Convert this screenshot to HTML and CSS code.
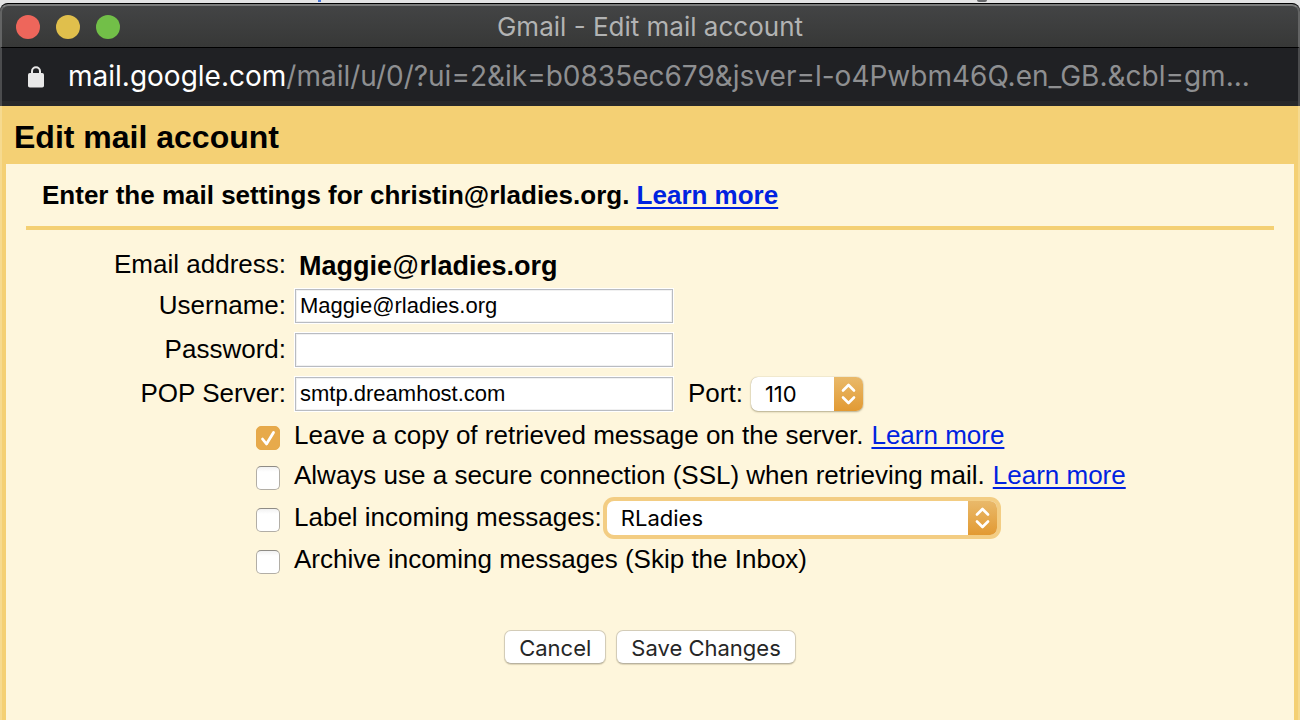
FILE: index.html
```html
<!DOCTYPE html>
<html lang="en">
<head>
<meta charset="utf-8">
<title>Gmail - Edit mail account</title>
<link rel="stylesheet" href="styles.css">
</head>
<body>
<div class="desktop">
  <span class="speck speck-blue"></span>
  <span class="speck speck-grey"></span>
</div>
<div class="window">
  <header class="titlebar">
    <div class="lights">
      <button class="light red" type="button" aria-label="Close"></button>
      <button class="light yellow" type="button" aria-label="Minimise"></button>
      <button class="light green" type="button" aria-label="Zoom"></button>
    </div>
    <div class="title">Gmail - Edit mail account</div>
  </header>
  <div class="urlbar">
    <svg class="lock" viewBox="0 0 16 22" aria-hidden="true">
      <path d="M4 8V5.200a4 4 0 0 1 8 0V8" fill="none" stroke="#e8e8e8" stroke-width="2"/>
      <rect x="0" y="7" width="16" height="14.5" rx="1.8" fill="#e8e8e8"/>
    </svg>
    <div class="url"><span class="host">mail.google.com</span>/mail/u/0/?ui=2&amp;ik=b0835ec679&amp;jsver=l-o4Pwbm46Q.en_GB.&amp;cbl=gm...</div>
  </div>
  <main class="page">
    <h1 class="heading">Edit mail account</h1>
    <form class="panel">
      <h2 class="intro">Enter the mail settings for christin@rladies.org. <a href="#">Learn more</a></h2>
      <div class="fields">
        <span class="label">Email address:</span>
        <div class="field email-row"><strong class="email">Maggie<span class="at">@</span>rladies.org</strong></div>
        <label class="label" for="username">Username:</label>
        <div class="field"><input class="text" id="username" type="text" value="Maggie@rladies.org"></div>
        <label class="label" for="password">Password:</label>
        <div class="field"><input class="text" id="password" type="password"></div>
        <label class="label" for="server">POP Server:</label>
        <div class="field">
          <input class="text" id="server" type="text" value="smtp.dreamhost.com">
          <label class="port-label" for="port">Port:</label>
          <div class="picker port">
            <select id="port"><option>110</option></select>
            <span class="arrows"><svg viewBox="0 0 29 34"><path d="M9 13.500l5.500-5.500L20 13.500M9 20.500l5.500 5.500 5.500-5.500"/></svg></span>
          </div>
        </div>
      </div>
      <div class="options">
        <div class="option">
          <input class="check" id="leave" type="checkbox" checked>
          <label for="leave">Leave a copy of retrieved message on the server.</label>
          <a href="#">Learn more</a>
        </div>
        <div class="option">
          <input class="check" id="ssl" type="checkbox">
          <label for="ssl">Always use a secure connection (SSL) when retrieving mail.</label>
          <a href="#">Learn more</a>
        </div>
        <div class="option tall">
          <input class="check" id="label" type="checkbox">
          <label for="label">Label incoming messages:</label>
          <div class="picker tag focused">
            <select aria-label="Label"><option>RLadies</option></select>
            <span class="arrows"><svg viewBox="0 0 29 34"><path d="M9 13.500l5.500-5.500L20 13.500M9 20.500l5.500 5.500 5.500-5.500"/></svg></span>
          </div>
        </div>
        <div class="option">
          <input class="check" id="archive" type="checkbox">
          <label for="archive">Archive incoming messages (Skip the Inbox)</label>
        </div>
      </div>
      <div class="actions">
        <button class="btn" type="button">Cancel</button>
        <button class="btn" type="button">Save Changes</button>
      </div>
    </form>
  </main>
</div>
</body>
</html>
```
FILE: styles.css
```css
* { box-sizing: border-box; }

body {
  margin: 0;
  min-height: 100vh;
  display: flex;
  flex-direction: column;
  background: #e3e3e4;
  color: #000;
  font-family: "Liberation Sans", Arial, sans-serif;
  font-size: 26px;
  line-height: 30px;
}

a { color: #0022e0; text-decoration-thickness: 2px; text-underline-offset: 3px; }

/* Desktop strip above the window */
.desktop { position: relative; height: 3px; }
.speck { position: absolute; top: 0; }
.speck-blue { left: 318px; width: 3px; height: 2px; background: #4a76d8; }
.speck-grey { left: 977px; width: 10px; height: 2px; background: #66676a; border-radius: 0 0 5px 5px; }

.window {
  flex: 1;
  display: flex;
  flex-direction: column;
  border-top: 1px solid #000;
  border-radius: 8px 8px 0 0;
  overflow: hidden;
  background: #202124;
}

.titlebar {
  display: grid;
  grid-template-columns: 1fr auto 1fr;
  align-items: center;
  height: 44px;
  padding: 0 16px;
  border: 2px solid #636464;
  border-top-color: #7b7c7c;
  border-bottom: 1px solid #000;
  border-radius: 8px 8px 0 0;
  background: linear-gradient(#434445, #373837);
  font-family: Inter, sans-serif;
  font-size: 26px;
  color: #b2b3b3;
}
.lights { display: flex; gap: 16px; margin-left: -2px; }
.light { width: 24px; height: 24px; padding: 0; border: 0; border-radius: 50%; }
.red { background: #ee665b; }
.yellow { background: #e0bf4c; }
.green { background: #72bf48; }

.urlbar {
  display: flex;
  align-items: center;
  gap: 24px;
  height: 58px;
  padding: 0 26px;
  border: 2px solid #4b4c4e;
  border-width: 0 2px;
  background: linear-gradient(#202124 53px, #27282a 53px);
  font-family: Inter, sans-serif;
  font-size: 28px;
  line-height: 40px;
  color: #8e8f91;
}
.lock { flex: none; width: 16px; height: 22px; }
.url { padding-bottom: 2px; white-space: nowrap; }
.host { color: #fff; }

.page {
  flex: 1;
  display: flex;
  flex-direction: column;
  padding: 0 4px;
  border: 2px solid #f6da8f;
  border-width: 0 2px;
  background: #f4d074;
}
.heading { margin: 0; padding: 14px 8px 10px; font-size: 32px; line-height: 34px; }

.panel { flex: 1; padding: 0 20px; background: #fef6dc; }
.intro {
  margin: 0 0 16px;
  padding: 16px;
  border-bottom: 4px solid #f4d074;
  font-size: 26px;
  line-height: 30px;
}

.fields {
  display: grid;
  grid-template-columns: 260px 1fr;
  grid-template-rows: 38px repeat(3, 44px);
  column-gap: 8px;
  align-items: center;
}
.label { padding-bottom: 2px; text-align: right; }
.field { display: flex; align-items: center; padding-left: 1px; }
.email-row { padding: 2px 0 0 5px; }
.email { font-size: 27px; }
.at { font-weight: 400; }

.text {
  width: 378px;
  height: 34px;
  padding: 0 4px;
  border: 1px solid #b9bcc2;
  border-radius: 0;
  background: #fff;
  box-shadow: 0 0 0 1px #fff, inset 0 0 0 1px #f1f1f1;
  font: 22px "Liberation Sans", Arial, sans-serif;
  color: #000;
}
.port-label { padding: 0 8px 2px 15px; }

.picker {
  position: relative;
  height: 34px;
  border-radius: 7px;
  background: #fff;
  box-shadow: 0 0 1px 0 rgba(90, 80, 40, .5), 0 1px 2px rgba(90, 80, 40, .4);
  overflow: hidden;
}
.picker select {
  appearance: none;
  width: 100%;
  height: 100%;
  padding: 0 40px 0 14px;
  border: 0;
  background: none;
  font: 22px Inter, sans-serif;
  color: #000;
  outline: none;
}
.port { width: 112px; }
.tag { width: 390px; margin-left: -3px; }
.focused { box-shadow: 0 0 0 4px #f3cd83; }
.arrows {
  position: absolute;
  inset: 0 0 0 auto;
  width: 29px;
  background: linear-gradient(#e9b96a, #e29a33);
  pointer-events: none;
}
.arrows svg { display: block; width: 29px; height: 34px; }
.arrows path { fill: none; stroke: #fff; stroke-width: 2.600; stroke-linecap: round; stroke-linejoin: round; }

.options { padding-left: 230px; }
.option { display: flex; align-items: center; gap: 8px; height: 40px; }
.option.tall { height: 44px; }
.option label, .option a { padding-bottom: 2px; }
.check {
  appearance: none;
  flex: none;
  width: 24px;
  height: 24px;
  margin: 4px 6px 0 0;
  border: 1px solid #b2aea6;
  border-top-color: #8f8c86;
  border-radius: 5px;
  background: linear-gradient(#f2f2f2, #fff 5px);
}
.check:checked {
  border-color: #e6a94a;
  background: #e7aa4b url("data:image/svg+xml,%3Csvg xmlns='http://www.w3.org/2000/svg' viewBox='0 0 24 24'%3E%3Cpath d='M6.500 13l4 5L17.500 6.500' fill='none' stroke='white' stroke-width='2.800' stroke-linecap='round' stroke-linejoin='round'/%3E%3C/svg%3E") center / 24px 24px;
}

.actions { display: flex; justify-content: center; gap: 10px; padding: 50px 0; }
.btn {
  height: 34px;
  padding: 2px 14px 0;
  border: 1px solid #d3ccb8;
  border-bottom-color: #b8b2a0;
  border-radius: 7px;
  background: #fff;
  box-shadow: 0 1px 1px rgba(90, 80, 40, .2);
  font: 22px Inter, sans-serif;
  color: #262626;
}
```
